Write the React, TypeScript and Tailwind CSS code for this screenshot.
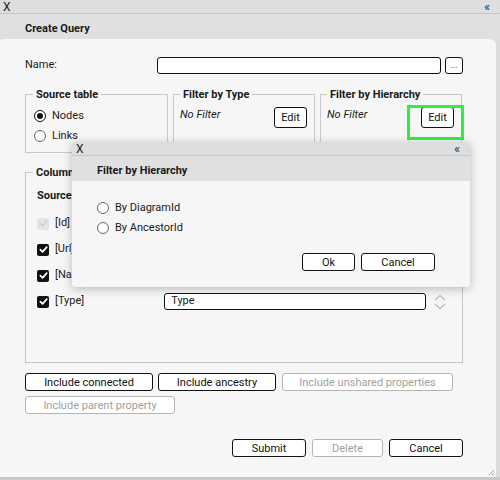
import React from "react"

function Btn({ children, className = "", disabled = false }: { children: React.ReactNode; className?: string; disabled?: boolean }) {
  return (
    <button
      className={
        "h-[18px] rounded-[3px] border bg-white text-[11px] leading-none " +
        (disabled ? "border-[#b4b4b4] bg-[#f6f6f6] text-[#a0a0a0] " : "border-[#111] text-[#111] ") +
        className
      }
    >
      {children}
    </button>
  )
}

function Radio({ checked = false, label }: { checked?: boolean; label: string }) {
  return (
    <div className="flex items-center gap-[6px] h-[20px]">
      <span className={"flex h-[12px] w-[12px] items-center justify-center rounded-full border bg-white " + (checked ? "border-[#111]" : "border-[#666]")}>
        {checked && <span className="h-[6px] w-[6px] rounded-full bg-[#111]" />}
      </span>
      <span className="text-[11px] text-[#1a1a1a]">{label}</span>
    </div>
  )
}

function Check({ disabled = false, label }: { disabled?: boolean; label: string }) {
  return (
    <div className="flex items-center gap-[6px] h-[26px]">
      <span className={"flex h-[12px] w-[12px] items-center justify-center rounded-[2px] " + (disabled ? "bg-[#e4e4e4]" : "bg-[#111]")}>
        <svg width="9" height="9" viewBox="0 0 10 10">
          <path d="M1.5 5.2 L4 7.6 L8.6 2.4" fill="none" stroke={disabled ? "#cfcfcf" : "#fff"} strokeWidth="1.9" strokeLinecap="round" strokeLinejoin="round" />
        </svg>
      </span>
      <span className="text-[11px] text-[#1a1a1a]">{label}</span>
    </div>
  )
}

function TitleBar({ left = 3 }: { left?: number }) {
  return (
    <div className={"flex h-[14px] items-center justify-between border-b border-[#c6c6c6] bg-[#dedede] pr-[10px] " + (left === 3 ? "pl-[3px]" : "pl-[4px] rounded-t-[3px]")}>
      <span className="text-[12px] leading-none text-[#222]">X</span>
      <span className="text-[13px] leading-none text-[#333]">«</span>
    </div>
  )
}

export default function App() {
  return (
    <div className="relative h-[480px] w-[500px] overflow-hidden bg-[#dcdcdc] font-['Roboto','Liberation_Sans',sans-serif] text-[#1a1a1a]">
      <TitleBar />
      <div className="h-[25px] bg-[#e0e0e0] pl-[25px] pt-[8px] text-[11px] font-bold leading-[13px]">Create Query</div>

      <div className="mr-[4px] flex h-[438px] flex-col rounded-tr-[6px] rounded-tl-[3px] bg-[#f6f6f6] pl-[25px] pr-[33px] pt-[18px]">
        <div className="flex h-[17px] items-center">
          <span className="w-[132px] text-[11px]">Name:</span>
          <div className="h-[17px] w-[284px] rounded-[3px] border border-[#111] bg-white" />
          <button className="ml-[4px] flex h-[17px] w-[18px] items-center justify-center rounded-[3px] border border-[#111] bg-white text-[9px] leading-none">...</button>
        </div>

        <div className="mt-[14px] flex gap-[5px]">
          <fieldset className="h-[65px] w-[143px] border border-[#c8c8c8]">
            <legend className="ml-[7px] px-[3px] text-[11px] font-bold leading-[13px]">Source table</legend>
            <div className="pl-[8px] pt-[5px]">
              <Radio checked label="Nodes" />
              <Radio label="Links" />
            </div>
          </fieldset>
          <fieldset className="h-[65px] w-[142px] border border-[#c8c8c8]">
            <legend className="ml-[6px] px-[3px] text-[11px] font-bold leading-[13px]">Filter by Type</legend>
            <div className="flex items-start justify-between pl-[6px] pr-[7px] pt-[6px]">
              <span className="text-[11px] italic">No Filter</span>
              <Btn className="h-[21px] w-[33px]">Edit</Btn>
            </div>
          </fieldset>
          <fieldset className="relative h-[65px] w-[142px] border border-[#c8c8c8]">
            <legend className="ml-[6px] px-[3px] text-[11px] font-bold leading-[13px]">Filter by Hierarchy</legend>
            <div className="flex items-start justify-between pl-[6px] pr-[7px] pt-[6px]">
              <span className="text-[11px] italic">No Filter</span>
              <Btn className="h-[21px] w-[33px]">Edit</Btn>
            </div>
            <div className="absolute left-[86px] top-[4px] h-[35px] w-[57px] border-[3px] border-[#2df043]" />
          </fieldset>
        </div>

        <fieldset className="mt-[13px] h-[197px] w-[438px] border border-[#c8c8c8]">
          <legend className="ml-[7px] px-[3px] text-[11px] font-bold leading-[13px]">Columns</legend>
          <div className="pl-[11px]">
            <div className="pt-[9px] text-[11px] font-bold">Source</div>
            <div className="pt-[6px]">
              <Check disabled label="[Id]" />
              <Check label="[Url]" />
              <Check label="[Name]" />
              <div className="flex items-center">
                <Check label="[Type]" />
                <div className="ml-[80px] flex h-[17px] w-[262px] items-center rounded-[3px] border border-[#111] bg-white pl-[6px] text-[11px]">Type</div>
                <svg className="ml-[7px]" width="14" height="18" viewBox="0 0 14 18">
                  <path d="M2 7 L7 2.5 L12 7" fill="none" stroke="#c4c4c4" strokeWidth="1.6" />
                  <path d="M2 11 L7 15.5 L12 11" fill="none" stroke="#c4c4c4" strokeWidth="1.6" />
                </svg>
              </div>
            </div>
          </div>
        </fieldset>

        <div className="mt-[10px] flex gap-[5px]">
          <Btn className="w-[128px]">Include connected</Btn>
          <Btn className="w-[118px]">Include ancestry</Btn>
          <Btn disabled className="ml-[1px] w-[171px]">Include unshared properties</Btn>
        </div>
        <div className="mt-[5px] flex">
          <Btn disabled className="w-[150px]">Include parent property</Btn>
        </div>

        <div className="mt-[25px] flex justify-end gap-[6px]">
          <Btn className="w-[74px]">Submit</Btn>
          <Btn disabled className="w-[71px]">Delete</Btn>
          <Btn className="w-[74px]">Cancel</Btn>
        </div>
      </div>
      <div className="h-[3px] bg-[#c9c9c9]" />
      <svg className="absolute bottom-[4px] right-[5px]" width="8" height="8" viewBox="0 0 8 8">
        <path d="M7 2 L2 7 M7 5 L5 7" stroke="#888" strokeWidth="0.8" />
      </svg>

      <div className="absolute left-[72px] top-[142px] w-[398px] rounded-b-[4px] shadow-[0_2px_10px_rgba(0,0,0,0.25)]">
        <TitleBar left={4} />
        <div className="h-[25px] bg-[#e0e0e0] pl-[25px] pt-[8px] text-[11px] font-bold leading-[13px]">Filter by Hierarchy</div>
        <div className="h-[106px] rounded-b-[4px] bg-[#f6f6f6] pl-[25px] pr-[35px] pt-[17px]">
          <Radio label="By DiagramId" />
          <Radio label="By AncestorId" />
          <div className="mt-[15px] flex justify-end gap-[6px]">
            <Btn className="w-[53px]">Ok</Btn>
            <Btn className="w-[74px]">Cancel</Btn>
          </div>
        </div>
      </div>
    </div>
  )
}
